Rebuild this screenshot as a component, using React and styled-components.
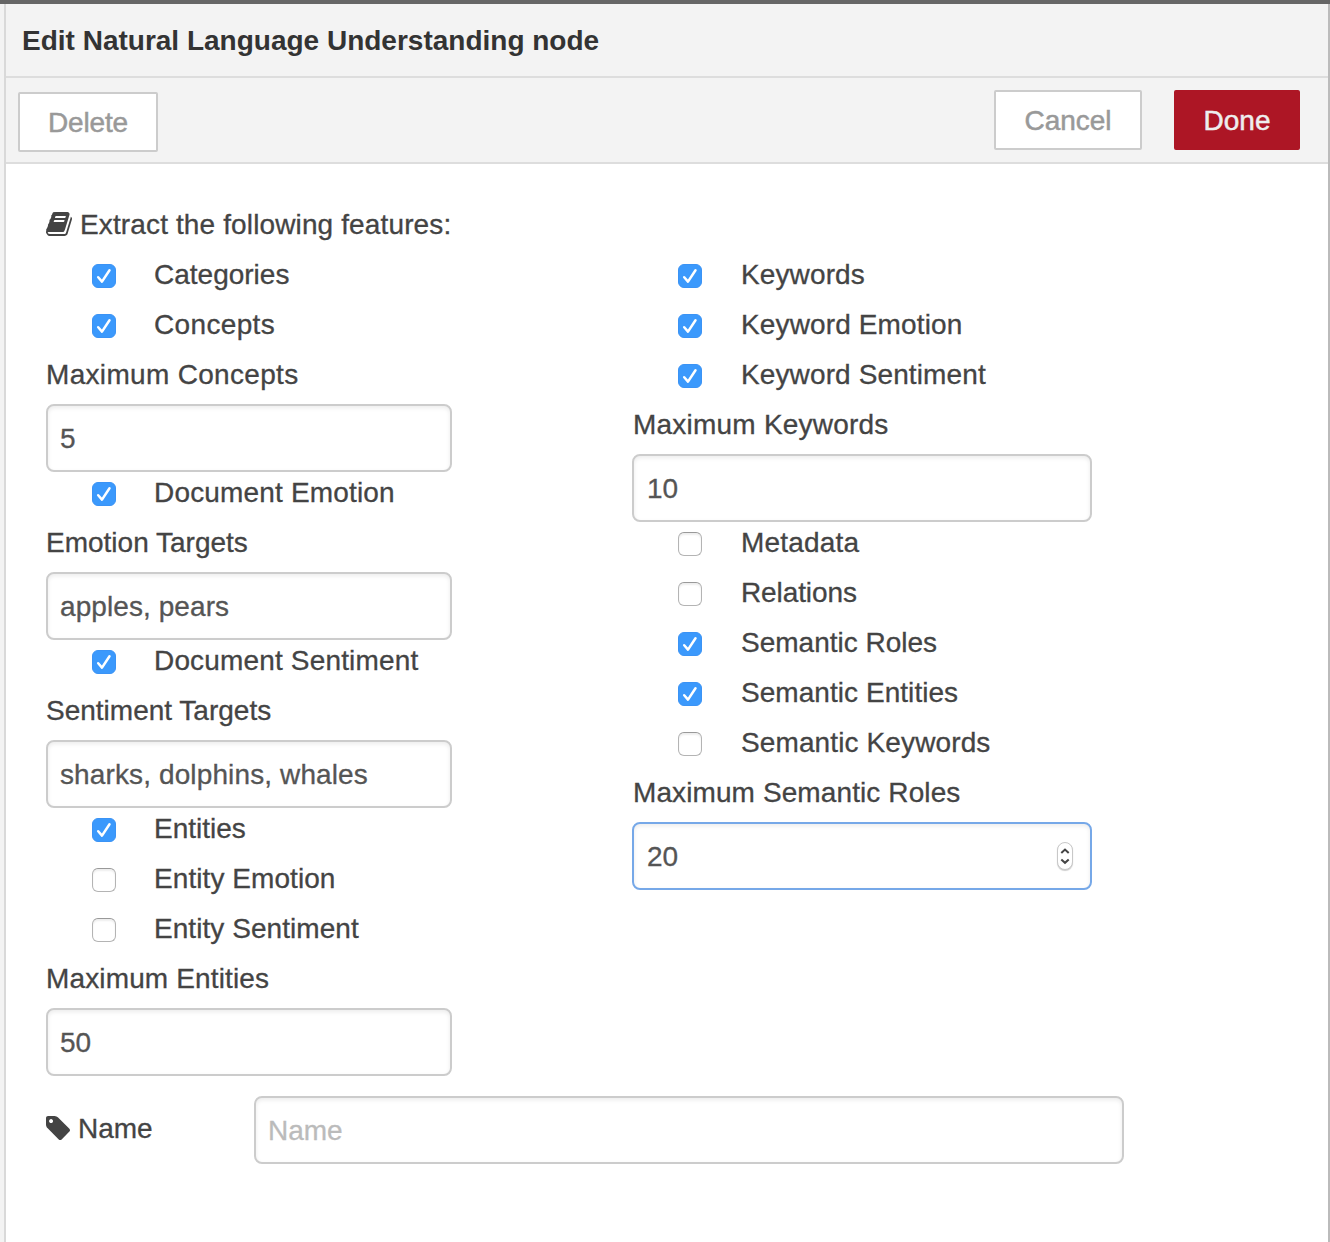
import React from 'react';
import styled, { createGlobalStyle } from 'styled-components';

const GlobalStyle = createGlobalStyle`
  *, *::before, *::after { box-sizing: border-box; }
  body {
    margin: 0;
    background: #f3f3f3;
    color: #444;
    font: 28px/40px "Liberation Sans", Arial, sans-serif;
  }
`;

const Tray = styled.div`
  height: 1242px;
  overflow: hidden;
  display: flex;
  flex-direction: column;
  border-top: 4px solid #666;
  padding-left: 4px;
`;

const Panel = styled.section`
  flex: 1;
  border-left: 2px solid #d9d9d9;
  border-right: 2px solid #bbb;
  background: #fff;
`;

const Title = styled.h1`
  margin: 0;
  height: 74px;
  padding: 17px 0 0 16px;
  background: #f3f3f3;
  border-bottom: 2px solid #ddd;
  color: #333;
  font-size: 28px;
  line-height: 40px;
  font-weight: 700;
`;

const Toolbar = styled.div`
  display: flex;
  align-items: flex-start;
  height: 86px;
  padding: 12px 28px 0 12px;
  background: #f3f3f3;
  border-bottom: 2px solid #ddd;
`;

const Button = styled.button`
  width: ${(p) => p.$width}px;
  height: 60px;
  margin: ${(p) => p.$margin || '0'};
  padding: 2px 0 0;
  border: 2px solid ${(p) => (p.$primary ? '#ad1625' : '#ccc')};
  border-radius: 2px;
  background: ${(p) => (p.$primary ? '#ad1625' : '#fff')};
  color: ${(p) => (p.$primary ? '#eee' : '#999')};
  font: inherit;
  line-height: 54px;
  letter-spacing: ${(p) => p.$track || 0}px;
  -webkit-text-stroke: 0.5px currentColor;
`;

const Form = styled.form`
  padding: 40px 40px 0;
`;

const Heading = styled.div`
  display: flex;
  align-items: center;
  gap: 8px;
  height: 40px;
  margin-bottom: 10px;
`;

const Columns = styled.div`
  display: grid;
  grid-template-columns: 406px 460px;
  column-gap: 180px;
  align-items: start;
`;

const Column = styled.div`
  --text-inset: ${(p) => p.$inset || 0}px;
`;

const Text = styled.span`
  display: block;
  padding-top: 2px;
  margin-left: var(--text-inset, 0);
  white-space: nowrap;
  letter-spacing: ${(p) => p.$track || 0}px;
  -webkit-text-stroke: 0.3px currentColor;
`;

const CheckRow = styled.label`
  display: flex;
  align-items: center;
  gap: 38px;
  height: 40px;
  margin-bottom: 10px;
  padding-left: 46px;
`;

const Box = styled.span`
  display: grid;
  place-items: center;
  width: 24px;
  height: 24px;
  margin-top: 4px;
  border: ${(p) => (p.$on ? '1px solid #3b93f5' : '1px solid #b4b4b4')};
  border-top-color: ${(p) => (p.$on ? '#3b93f5' : '#999')};
  border-radius: 6px;
  background: ${(p) => (p.$on ? '#3b99fc' : '#fff')};
  box-shadow: ${(p) => (p.$on ? 'none' : 'inset 0 2px 2px rgba(0, 0, 0, 0.07)')};
`;

const FieldLabel = styled.div`
  display: flex;
  align-items: center;
  height: 40px;
  margin-bottom: 10px;
`;

const InputFrame = styled.div`
  display: flex;
  align-items: center;
  width: ${(p) => p.$width || '100%'};
  height: 68px;
  padding: 0 17px 0 calc(12px + var(--text-inset, 0px));
  border: 2px solid ${(p) => (p.$focused ? '#76a8e8' : '#ccc')};
  border-radius: 8px;
  background: #fff;
  box-shadow: inset 0 2px 4px rgba(0, 0, 0, 0.08);
`;

const Input = styled.input`
  flex: 1;
  min-width: 0;
  height: 60px;
  padding: 2px 0 0;
  border: 0;
  outline: 0;
  background: transparent;
  color: #555;
  font: inherit;
  letter-spacing: ${(p) => p.$track || 0}px;
  -webkit-text-stroke: 0.3px currentColor;
  &::placeholder { color: #bbb; opacity: 1; }
`;

const Stepper = styled.span`
  display: grid;
  place-items: center;
  width: 16px;
  height: 28px;
  border: 1px solid #c8c8c8;
  border-radius: 8px;
  background: #fff;
  box-shadow: 0 1px 1px rgba(0, 0, 0, 0.2);
`;

const NameRow = styled.div`
  display: flex;
  align-items: center;
  margin-top: 20px;
`;

const NameLabel = styled.div`
  display: flex;
  align-items: center;
  gap: 8px;
  width: 208px;
  height: 40px;
  margin-bottom: 4px;
`;

const BookIcon = () => (
  <svg width="26" height="24" viewBox="0 128 1664 1536" fill="#444">
    <path d="M1639 478q40 57 18 129l-275 906q-19 64-76.5 107.5t-122.5 43.5h-923q-77 0-148.5-53.5t-99.5-131.5q-24-67-2-127 0-4 3-27t4-37q1-8-3-21.5t-3-19.5q2-11 8-21t16.5-23.5 16.5-23.5q23-38 45-91.5t30-91.5q3-10 .5-30t-.5-28q3-11 17-28t17-23q21-36 42-92t25-90q1-9-2.5-32t.5-28q4-13 22-30.5t22-22.5q19-26 42.5-84.5t27.5-96.5q1-8-3-25.5t-2-26.5q2-8 9-18t18-23 17-21q8-12 16.5-30.5t15-35 16-36 19.5-32 26.5-23.5 36-11.5 47.5 5.5l-1 3q38-9 51-9h761q74 0 114 56t18 130l-274 906q-36 119-71.5 153.5t-128.5 34.5h-869q-27 0-38 15-11 16-1 43 24 70 144 70h923q29 0 56-15.5t35-41.5l300-987q7-22 5-57 38 15 59 43zm-1064 2q-4 13 2 22.5t20 9.5h608q13 0 25.5-9.5t16.5-22.5l21-64q4-13-2-22.5t-20-9.5h-608q-13 0-25.5 9.5t-16.5 22.5zm-83 256q-4 13 2 22.5t20 9.5h608q13 0 25.5-9.5t16.5-22.5l21-64q4-13-2-22.5t-20-9.5h-608q-13 0-25.5 9.5t-16.5 22.5z" />
  </svg>
);

const TagIcon = () => (
  <svg width="24" height="24" viewBox="128 128 1515 1515" fill="#444">
    <path d="M576 448q0-53-37.5-90.5t-90.5-37.5-90.5 37.5-37.5 90.5 37.5 90.5 90.5 37.5 90.5-37.5 37.5-90.5zm1067 576q0 53-37 90l-491 492q-39 37-91 37-53 0-90-37l-715-716q-38-37-64.5-101t-26.5-117v-416q0-52 38-90t90-38h416q53 0 117 26.5t102 64.5l715 714q37 39 37 91z" />
  </svg>
);

const Check = ({ label, on, track }) => (
  <CheckRow>
    <Box $on={on}>
      {on && (
        <svg width="22" height="22" viewBox="0 0 22 22" fill="none" stroke="#fff" strokeWidth="2.5" strokeLinecap="round" strokeLinejoin="round">
          <path d="M5.2 12.2 9 16.6 16.5 5.2" />
        </svg>
      )}
    </Box>
    <Text $track={track}>{label}</Text>
  </CheckRow>
);

const Field = ({ label, value, focused, track, valueTrack }) => (
  <div>
    <FieldLabel><Text $track={track}>{label}</Text></FieldLabel>
    <InputFrame $focused={focused}>
      <Input defaultValue={value} $track={valueTrack} aria-label={label} />
      {focused && (
        <Stepper>
          <svg width="14" height="24" viewBox="0 0 14 24" fill="none" stroke="#444" strokeWidth="2">
            <path d="M3.3 9 7 5.6 10.7 9M3.3 15.4 7 18.8l3.7-3.4" />
          </svg>
        </Stepper>
      )}
    </InputFrame>
  </div>
);

export default function App() {
  return (
    <>
      <GlobalStyle />
      <Tray>
        <Panel>
          <Title>Edit Natural Language Understanding node</Title>
          <Toolbar>
            <Button $width={140} $margin="2px auto 0 0" $track={-0.15}>Delete</Button>
            <Button $width={148} $margin="0 32px 0 0">Cancel</Button>
            <Button $width={126} $primary>Done</Button>
          </Toolbar>
          <Form>
            <Heading><BookIcon /><Text $track={0.13}>Extract the following features:</Text></Heading>
            <Columns>
              <Column>
                <Check label="Categories" on />
                <Check label="Concepts" on track={0.35} />
                <Field label="Maximum Concepts" value="5" track={0.32} />
                <Check label="Document Emotion" on track={0.17} />
                <Field label="Emotion Targets" value="apples, pears" valueTrack={0.08} />
                <Check label="Document Sentiment" on track={0.16} />
                <Field label="Sentiment Targets" value="sharks, dolphins, whales" valueTrack={0.12} />
                <Check label="Entities" on />
                <Check label="Entity Emotion" track={0.07} />
                <Check label="Entity Sentiment" track={0.06} />
                <Field label="Maximum Entities" value="50" track={0.14} />
              </Column>
              <Column $inset={1}>
                <Check label="Keywords" on track={0.12} />
                <Check label="Keyword Emotion" on track={0.13} />
                <Check label="Keyword Sentiment" on track={0.12} />
                <Field label="Maximum Keywords" value="10" track={0.22} />
                <Check label="Metadata" track={0.18} />
                <Check label="Relations" track={-0.1} />
                <Check label="Semantic Roles" on />
                <Check label="Semantic Entities" on track={0.05} />
                <Check label="Semantic Keywords" track={0.12} />
                <Field label="Maximum Semantic Roles" value="20" focused track={0.1} />
              </Column>
            </Columns>
            <NameRow>
              <NameLabel><TagIcon /><Text>Name</Text></NameLabel>
              <InputFrame $width="870px">
                <Input placeholder="Name" aria-label="Name" />
              </InputFrame>
            </NameRow>
          </Form>
        </Panel>
      </Tray>
    </>
  );
}
